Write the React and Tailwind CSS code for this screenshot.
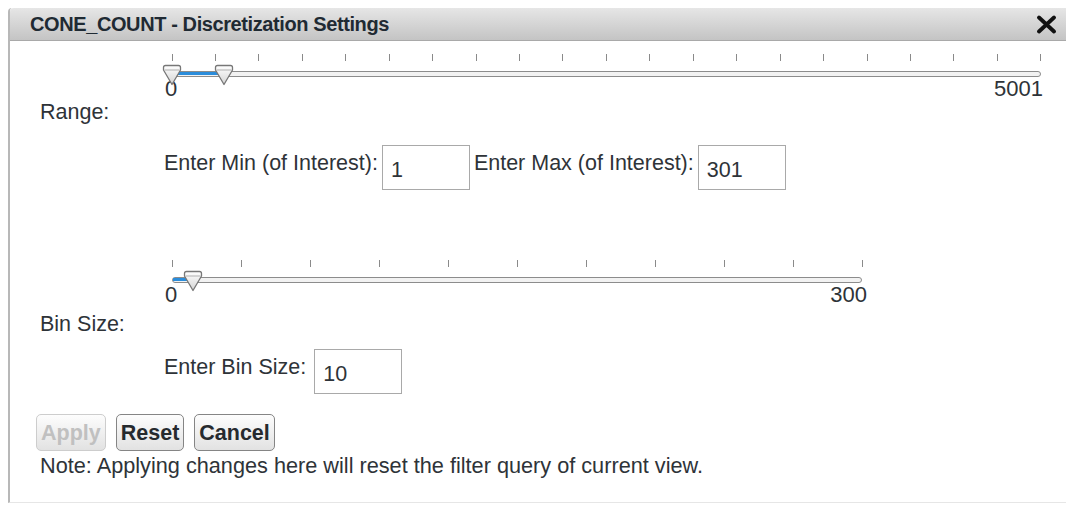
import React, { useState } from 'react';

const FONT = { fontFamily: '"Liberation Sans", Arial, sans-serif' };

// Thumb of the slider: flat top, pointed bottom
const Thumb = ({ left }) => (
  <svg
    width="20"
    height="22"
    viewBox="0 0 20 22"
    className="absolute top-[10px] -ml-[10px]"
    style={{ left }}
  >
    <defs>
      <linearGradient id="thumbFill" x1="0" y1="0" x2="0" y2="1">
        <stop offset="0" stopColor="#ffffff" />
        <stop offset="1" stopColor="#d4d4d4" />
      </linearGradient>
    </defs>
    <path
      d="M3.5 1.5 H16.5 Q18.5 1.5 18.5 3.5 V6 L10 20.5 L1.5 6 V3.5 Q1.5 1.5 3.5 1.5 Z"
      fill="url(#thumbFill)"
      stroke="#777"
      strokeWidth="1.3"
      strokeLinejoin="round"
    />
    <path d="M2.5 6 H17.5" stroke="#b0b0b0" strokeWidth="1" />
  </svg>
);

const Slider = ({ width, ticks, max, values, labelShift }) => {
  const pos = (v) => (v / max) * width;
  const lo = values.length > 1 ? pos(values[0]) : 0;
  const hi = pos(values[values.length - 1]);
  return (
    <div className="relative" style={{ width }}>
      {/* tick marks */}
      <div className="flex justify-between h-[7px] -mx-[0.5px]">
        {Array.from({ length: ticks }).map((_, i) => (
          <span key={i} className="w-px h-[7px] bg-[#8a8a8a]" />
        ))}
      </div>
      {/* track */}
      <div className="relative mt-[10px] h-[6px] rounded-full border border-[#8c8c8c] bg-[#f2f2f2]">
        <div
          className="absolute top-0 h-[3px] bg-[#2b8ddb]"
          style={{ left: lo, width: Math.max(hi - lo, 0) }}
        />
      </div>
      {values.map((v, i) => (
        <Thumb key={i} left={pos(v)} />
      ))}
      {/* end labels */}
      <div className={`flex justify-between text-[22px] leading-[24px] text-[#2e3338] -ml-[7px] ${labelShift}`}>
        <span>0</span>
        <span>{max}</span>
      </div>
    </div>
  );
};

const Field = ({ value, onChange }) => (
  <input
    value={value}
    onChange={(e) => onChange(e.target.value)}
    className="w-[88px] h-[45px] border border-[#a9a9a9] bg-white pl-[8px] pt-[6px] text-[21.5px] text-[#2e3338] outline-none"
    style={FONT}
  />
);

const Button = ({ children, disabled }) => (
  <button
    disabled={disabled}
    className={`h-[37px] px-[4px] rounded-[5px] border text-[21.5px] font-bold bg-gradient-to-b from-[#fdfdfd] to-[#e2e2e2] ${
      disabled ? 'border-[#cdcdcd] text-[#c0c0c0]' : 'border-[#858585] text-[#262a2e]'
    }`}
    style={FONT}
  >
    {children}
  </button>
);

export default function App() {
  const [min, setMin] = useState('1');
  const [max, setMax] = useState('301');
  const [bin, setBin] = useState('10');

  return (
    <div className="w-[1066px] h-[506px] bg-white pl-[8px] pt-[8px] overflow-hidden" style={FONT}>
      <div className="h-[495px] border-l-2 border-b border-l-[#b8b8b8] border-b-[#e6e6e6] rounded-tl-[4px]">
        {/* title bar */}
        <div className="h-[33px] flex items-center justify-between pl-[20px] pr-[9px] bg-gradient-to-b from-[#e6e6e6] to-[#c4c4c4] border-b border-[#a9a9a9] rounded-tl-[4px]">
          <span className="text-[20px] font-bold text-[#1f2a33] tracking-[-0.4px]">
            CONE_COUNT - Discretization Settings
          </span>
          <svg width="21" height="19" viewBox="0 0 21 19">
            <path d="M3 2.5 L18 16.5 M18 2.5 L3 16.5" stroke="#111" strokeWidth="3.8" strokeLinecap="round" />
          </svg>
        </div>

        <div className="text-[21.5px] leading-[24px] text-[#2e3338]">
          {/* range slider */}
          <div className="pl-[162px] pt-[13px]">
            <Slider width={869} ticks={21} max={5001} values={[0, 300]} labelShift="-mr-[2px]" />
          </div>
          <div className="pl-[30px] -mt-[1px]">Range:</div>
          <div className="pl-[154px] mt-[21px] flex items-start gap-[4px]">
            <span className="mt-[6px]">Enter Min (of Interest):</span>
            <Field value={min} onChange={setMin} />
            <span className="mt-[6px]">Enter Max (of Interest):</span>
            <Field value={max} onChange={setMax} />
          </div>

          {/* bin size slider */}
          <div className="pl-[162px] mt-[70px]">
            <Slider width={690} ticks={11} max={300} values={[9]} labelShift="-mr-[5px]" />
          </div>
          <div className="pl-[30px] mt-[5px]">Bin Size:</div>
          <div className="pl-[154px] mt-[13px] flex items-start gap-[8px]">
            <span className="mt-[6px]">Enter Bin Size:</span>
            <Field value={bin} onChange={setBin} />
          </div>

          <div className="pl-[26px] mt-[20px] flex gap-[10px]">
            <Button disabled>Apply</Button>
            <Button>Reset</Button>
            <Button>Cancel</Button>
          </div>
          <div className="pl-[30px] mt-[3px] text-[21.7px]">
            Note: Applying changes here will reset the filter query of current view.
          </div>
        </div>
      </div>
    </div>
  );
}
